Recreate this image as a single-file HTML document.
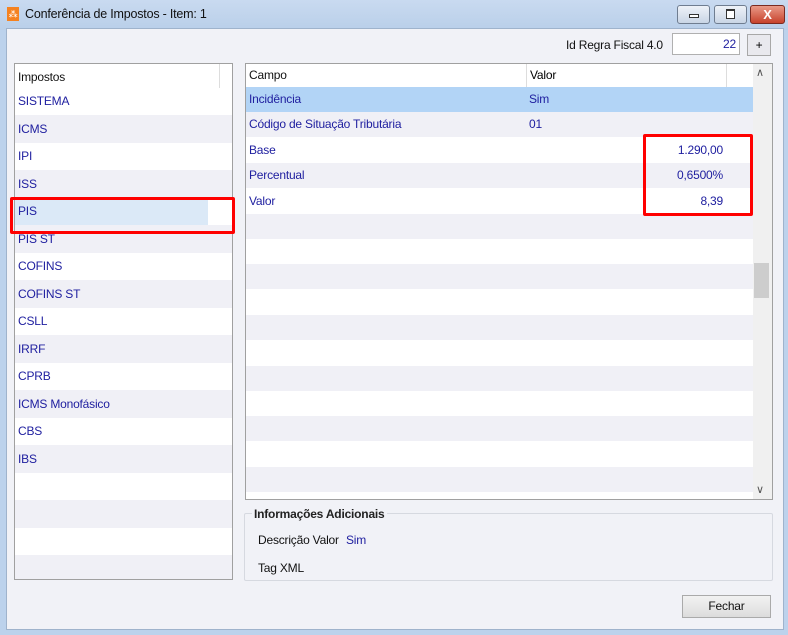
<!DOCTYPE html>
<html><head><meta charset="utf-8"><style>
body{margin:0;width:788px;height:635px;overflow:hidden;font-family:"Liberation Sans",sans-serif;font-size:12px;letter-spacing:-0.2px;background:#bcd2ec;position:relative}
.abs{position:absolute}
.title{left:0;top:0;width:788px;height:30px;background:linear-gradient(#c9daf0,#b9cfe9)}
.body{left:6px;top:28px;width:776px;height:600px;background:#f1f2f7;border:1px solid #9fb3cc}
.t{font-size:12.5px;color:#111}
.btn{border:1px solid #6f7d90;border-radius:3px;background:linear-gradient(#eef2f8,#c9d5e5)}
.list{background:#fff;border:1px solid #a0a0a0}
.row{position:absolute;left:0;right:0;padding-left:3px;color:#2020a0;box-sizing:border-box}
.g{background:#f0f0f6}
.hdr{color:#111}
</style></head><body>
<div class="abs title"></div>
<div class="abs" style="left:7px;top:7px;width:12px;height:14px;background:#f58220;color:#fff;font-size:9px;line-height:14px;text-align:center">⁂</div>
<div class="abs t" style="left:25px;top:7px">Conferência de Impostos - Item: 1</div>
<div class="abs btn" style="left:677px;top:5px;width:31px;height:17px"><div class="abs" style="left:11px;top:8px;width:8px;height:2px;border:1px solid #333;background:#fff"></div></div>
<div class="abs btn" style="left:714px;top:5px;width:31px;height:17px"><div class="abs" style="left:11px;top:3px;width:7px;height:7px;border:1px solid #333;border-top-width:2px;background:#fff"></div></div>
<div class="abs" style="left:750px;top:5px;width:33px;height:17px;border:1px solid #7a2a20;border-radius:3px;background:linear-gradient(#e99a88,#c7422c);color:#fff;font-weight:bold;text-align:center;line-height:17px;font-size:13px">X</div>
<div class="abs body"></div>
<div class="abs" style="left:566px;top:38px;color:#111">Id Regra Fiscal 4.0</div>
<div class="abs" style="left:672px;top:33px;width:68px;height:22px;background:#fff;border:1px solid #b0b0b0;box-sizing:border-box;text-align:right;padding-right:3px;line-height:21px;color:#2020a0">22</div>
<div class="abs" style="left:747px;top:34px;width:24px;height:22px;border:1px solid #a8a8a8;background:#e9e9ee;box-sizing:border-box;text-align:center;line-height:20px">+</div>

<div class="abs list" style="left:14px;top:63px;width:217px;height:515px">
<div class="row hdr" style="top:0;height:24px;line-height:26px;border-right:1px solid #ddd;width:205px">Impostos</div>
<div class="row" style="top:24px;height:27px;line-height:27px">SISTEMA</div>
<div class="row g" style="top:51px;height:28px;line-height:28px">ICMS</div>
<div class="row" style="top:79px;height:27px;line-height:27px">IPI</div>
<div class="row g" style="top:106px;height:28px;line-height:28px">ISS</div>
<div class="row" style="top:134px;height:27px;line-height:27px"><span style="display:inline-block;width:190px;background:#dbe9f7;margin-left:-3px;padding-left:3px">PIS</span></div>
<div class="row g" style="top:161px;height:28px;line-height:28px">PIS ST</div>
<div class="row" style="top:189px;height:27px;line-height:27px">COFINS</div>
<div class="row g" style="top:216px;height:28px;line-height:28px">COFINS ST</div>
<div class="row" style="top:244px;height:27px;line-height:27px">CSLL</div>
<div class="row g" style="top:271px;height:28px;line-height:28px">IRRF</div>
<div class="row" style="top:299px;height:27px;line-height:27px">CPRB</div>
<div class="row g" style="top:326px;height:28px;line-height:28px">ICMS Monofásico</div>
<div class="row" style="top:354px;height:27px;line-height:27px">CBS</div>
<div class="row g" style="top:381px;height:28px;line-height:28px">IBS</div>
<div class="row" style="top:409px;height:27px"></div>
<div class="row g" style="top:436px;height:28px"></div>
<div class="row" style="top:464px;height:27px"></div>
<div class="row g" style="top:491px;height:24px"></div>
</div>
<div class="abs" style="left:10px;top:197px;width:219px;height:31px;border:3px solid #f00;border-radius:2px"></div>

<div class="abs list" style="left:245px;top:63px;width:526px;height:435px;overflow:hidden">
<div class="row hdr" style="top:0;height:23px;line-height:22px;width:480px">Campo</div>
<div class="abs" style="left:280px;top:0;height:23px;line-height:22px;border-left:1px solid #ddd;padding-left:3px;width:196px;border-right:1px solid #ddd">Valor</div>
<div class="row" style="top:23px;height:25px;line-height:25px;width:507px;background:#b2d4f6">Incidência<span class="abs" style="left:283px">Sim</span></div>
<div class="row g" style="top:48px;height:25px;line-height:25px;width:507px">Código de Situação Tributária<span class="abs" style="left:283px">01</span></div>
<div class="row" style="top:73px;height:26px;line-height:26px;width:507px">Base<span class="abs" style="right:30px">1.290,00</span></div>
<div class="row g" style="top:99px;height:25px;line-height:25px;width:507px">Percentual<span class="abs" style="right:30px">0,6500%</span></div>
<div class="row" style="top:124px;height:26px;line-height:26px;width:507px">Valor<span class="abs" style="right:30px">8,39</span></div>
<div class="row g" style="top:150px;height:25px;width:507px"></div>
<div class="row g" style="top:200px;height:25px;width:507px"></div>
<div class="row g" style="top:251px;height:25px;width:507px"></div>
<div class="row g" style="top:302px;height:25px;width:507px"></div>
<div class="row g" style="top:352px;height:25px;width:507px"></div>
<div class="row g" style="top:403px;height:25px;width:507px"></div>
<div class="abs" style="left:507px;top:0;width:19px;height:435px;background:#f0f0f0"></div>
<div class="abs" style="left:508px;top:199px;width:15px;height:35px;background:#cdcdcd"></div>
<div class="abs" style="left:510px;top:2px;color:#555;font-size:11px">&#x2227;</div>
<div class="abs" style="left:510px;top:419px;color:#555;font-size:11px">&#x2228;</div>
</div>
<div class="abs" style="left:643px;top:134px;width:104px;height:76px;border:3px solid #f00;border-radius:2px"></div>

<div class="abs" style="left:244px;top:513px;width:527px;height:66px;border:1px solid #d6d9e0;border-radius:2px"></div>
<div class="abs" style="left:252px;top:507px;background:#f1f2f7;padding:0 2px;font-weight:bold;color:#222;font-size:12px">Informações Adicionais</div>
<div class="abs" style="left:258px;top:533px;color:#111">Descrição Valor <span style="color:#2020a0;margin-left:4px">Sim</span></div>
<div class="abs" style="left:258px;top:561px;color:#111">Tag XML</div>
<div class="abs" style="left:682px;top:595px;width:89px;height:23px;border:1px solid #aaa;background:linear-gradient(#f2f2f2,#dcdcdc);box-sizing:border-box;text-align:center;line-height:21px;color:#111">Fechar</div>
</body></html>
